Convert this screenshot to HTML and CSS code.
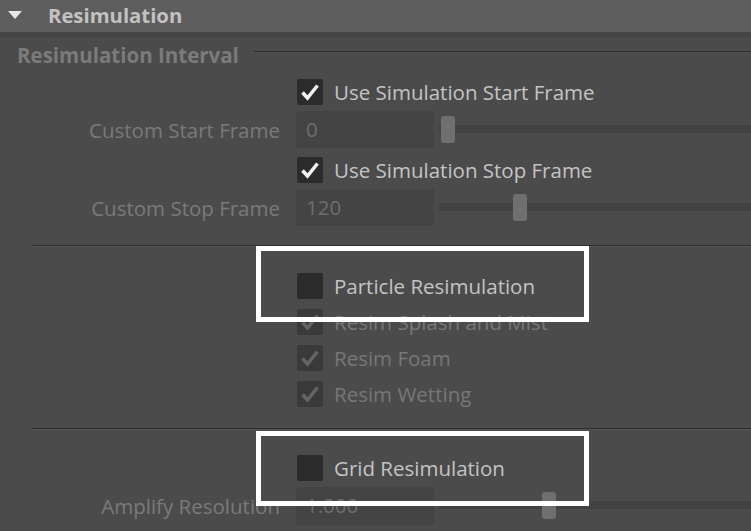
FILE: index.html
```html
<!DOCTYPE html>
<html>
<head>
<meta charset="utf-8">
<link rel="stylesheet" href="styles.css">
</head>
<body>
<div class="panel">
  <div class="header">
    <svg class="tri" width="16" height="10" viewBox="0 0 16 10"><polygon points="1,1 15,1 8,9" fill="#e6e6e6"/></svg>
    <span class="htitle">Resimulation</span>
  </div>
  <div class="strip"></div>
  <div class="body">
    <div class="group-title">
      <span class="gt-text">Resimulation Interval</span>
      <span class="gt-line"></span>
    </div>

    <div class="row check-row">
      <div class="label"></div>
      <div class="ctl">
        <span class="cb"><svg viewBox="0 0 26 26" width="26" height="26"><polyline points="5.5,13.5 10.5,19 20.5,6.5" fill="none" stroke="#f0f0f0" stroke-width="3.6"/></svg></span>
        <span class="ctext">Use Simulation Start Frame</span>
      </div>
    </div>
    <div class="row field-row">
      <div class="label dim">Custom Start Frame</div>
      <div class="ctl">
        <div class="field">0</div>
        <div class="slider"><div class="track"></div><div class="handle" style="left: 2px"></div></div>
      </div>
    </div>
    <div class="row check-row">
      <div class="label"></div>
      <div class="ctl">
        <span class="cb"><svg viewBox="0 0 26 26" width="26" height="26"><polyline points="5.5,13.5 10.5,19 20.5,6.5" fill="none" stroke="#f0f0f0" stroke-width="3.6"/></svg></span>
        <span class="ctext">Use Simulation Stop Frame</span>
      </div>
    </div>
    <div class="row field-row">
      <div class="label dim">Custom Stop Frame</div>
      <div class="ctl">
        <div class="field">120</div>
        <div class="slider"><div class="track"></div><div class="handle" style="left: 74px"></div></div>
      </div>
    </div>

    <div class="sep sep1"></div>

    <div class="row check-row">
      <div class="label"></div>
      <div class="ctl">
        <span class="cb"></span>
        <span class="ctext">Particle Resimulation</span>
      </div>
    </div>
    <div class="row check-row">
      <div class="label"></div>
      <div class="ctl">
        <span class="cb cb-dim"><svg viewBox="0 0 26 26" width="26" height="26"><polyline points="5.5,13.5 10.5,19 20.5,6.5" fill="none" stroke="#646464" stroke-width="3.6"/></svg></span>
        <span class="ctext dim">Resim Splash and Mist</span>
      </div>
    </div>
    <div class="row check-row">
      <div class="label"></div>
      <div class="ctl">
        <span class="cb cb-dim"><svg viewBox="0 0 26 26" width="26" height="26"><polyline points="5.5,13.5 10.5,19 20.5,6.5" fill="none" stroke="#646464" stroke-width="3.6"/></svg></span>
        <span class="ctext dim">Resim Foam</span>
      </div>
    </div>
    <div class="row check-row">
      <div class="label"></div>
      <div class="ctl">
        <span class="cb cb-dim"><svg viewBox="0 0 26 26" width="26" height="26"><polyline points="5.5,13.5 10.5,19 20.5,6.5" fill="none" stroke="#646464" stroke-width="3.6"/></svg></span>
        <span class="ctext dim">Resim Wetting</span>
      </div>
    </div>

    <div class="sep sep2"></div>

    <div class="row check-row">
      <div class="label"></div>
      <div class="ctl">
        <span class="cb"></span>
        <span class="ctext">Grid Resimulation</span>
      </div>
    </div>
    <div class="row field-row">
      <div class="label dim">Amplify Resolution</div>
      <div class="ctl">
        <div class="field tall">1.000</div>
        <div class="slider"><div class="track"></div><div class="handle" style="left: 103px"></div></div>
      </div>
    </div>
  </div>

  <div class="mark mark1"></div>
  <div class="mark mark2"></div>
</div>
</body>
</html>
```

FILE: styles.css
```css
html, body {
  margin: 0;
  padding: 0;
  background: #4b4b4b;
  overflow: hidden;
}
.panel {
  position: relative;
  width: 751px;
  height: 531px;
  overflow: hidden;
  font-family: "Open Sans", "Noto Sans", sans-serif;
  background: #4b4b4b;
}
.header {
  height: 32px;
  background: #5e5e5e;
  display: flex;
  align-items: center;
}
.tri {
  margin-left: 7px;
  margin-right: 25px;
  margin-top: -3px;
}
.htitle {
  font-weight: 700;
  font-size: 20.3px;
  color: #c2c2c2;
  margin-top: -3px;
}
.strip {
  height: 5px;
  background: #444444;
}
.body {
  display: flex;
  flex-direction: column;
}
.group-title {
  height: 37px;
  display: flex;
  align-items: center;
  padding-left: 17px;
}
.gt-text {
  font-weight: 700;
  font-size: 20.5px;
  color: #7b7b7b;
  margin-top: -2px;
}
.gt-line {
  flex: 1;
  height: 0;
  border-top: 1px solid #2c2c2c;
  border-bottom: 1px solid #525252;
  margin-left: 15px;
  margin-top: -7px;
}
.row {
  display: flex;
  align-items: center;
}
.check-row {
  height: 36px;
}
.field-row {
  height: 42px;
  align-items: flex-start;
}
.label {
  width: 280px;
  text-align: right;
  font-size: 20.5px;
  flex-shrink: 0;
}
.field-row .label {
  line-height: 37px;
  margin-top: 2px;
}
.dim {
  color: #7a7a7a;
}
.ctl {
  margin-left: 17px;
  display: flex;
  align-items: center;
  flex: 1;
}
.field-row .ctl {
  margin-left: 16px;
  align-items: flex-start;
  margin-top: 1px;
}
.cb {
  width: 26px;
  height: 26px;
  background: #2b2b2b;
  border-radius: 2px;
  display: block;
  flex-shrink: 0;
}
.cb svg {
  display: block;
}
.cb-dim {
  background: #3a3a3a;
}
.ctext {
  margin-left: 11px;
  font-size: 20.5px;
  color: #c4c4c4;
  margin-top: -1px;
}
.ctext.dim {
  color: #777777;
}
.field {
  width: 138px;
  height: 37px;
  background: #444444;
  border-radius: 2px;
  color: #6e6e6e;
  font-size: 20.5px;
  line-height: 37px;
  padding-left: 10px;
  box-sizing: border-box;
  flex-shrink: 0;
}
.field.tall {
  height: 38px;
}
.slider {
  position: relative;
  flex: 1;
  height: 37px;
  margin-left: 5px;
}
.track {
  position: absolute;
  left: 0;
  right: 0;
  top: 14px;
  height: 8px;
  background: #424242;
}
.handle {
  position: absolute;
  top: 5px;
  width: 14px;
  height: 27px;
  background: #6f6f6f;
  border-radius: 3px;
}
.sep {
  margin-left: 32px;
  height: 0;
  border-top: 1px solid #2d2d2d;
  border-bottom: 1px solid #545454;
}
.sep1 {
  margin-top: 15px;
  margin-bottom: 21px;
}
.sep2 {
  margin-top: 16px;
  margin-bottom: 20px;
}
.mark {
  position: absolute;
  left: 256px;
  width: 333px;
  border: 5px solid #ffffff;
  box-sizing: border-box;
}
.mark1 {
  top: 246px;
  height: 76px;
}
.mark2 {
  top: 431px;
  height: 75px;
}
```
